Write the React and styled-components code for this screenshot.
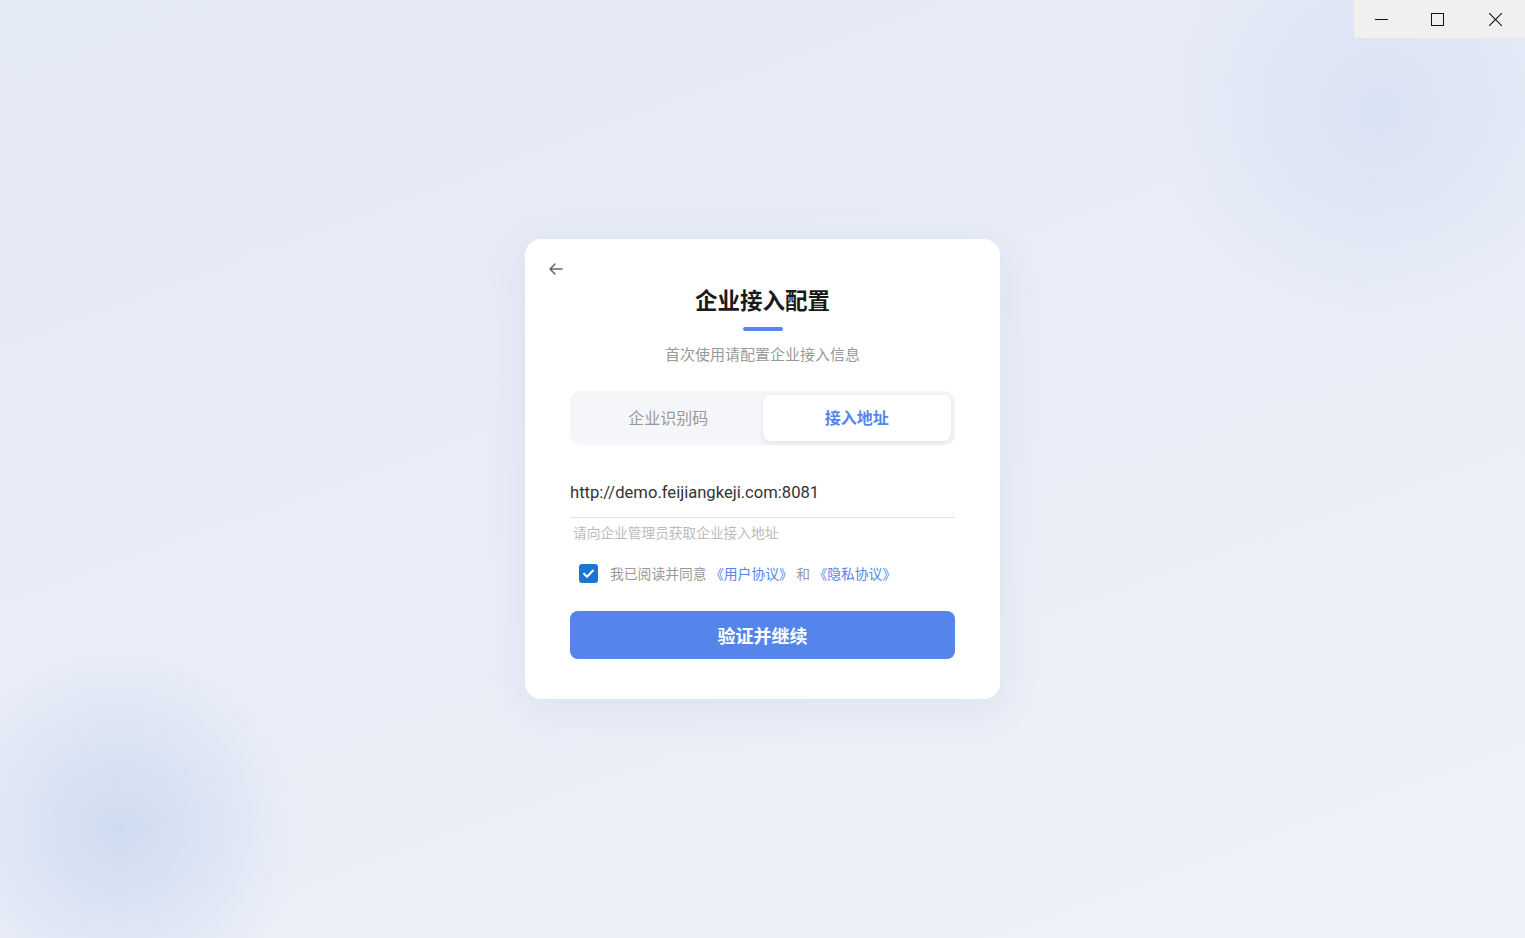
import React, { useState } from "react";
import styled, { createGlobalStyle } from "styled-components";

const GlobalStyle = createGlobalStyle`
  html, body { margin: 0; padding: 0; }
  body {
    font-family: Roboto, "Noto Sans CJK SC", sans-serif;
  }
`;

const Page = styled.div`
  position: relative;
  width: 100vw;
  height: 100vh;
  overflow: hidden;
  display: flex;
  align-items: center;
  justify-content: center;
  background:
    radial-gradient(circle at 120px 830px, rgba(200, 214, 238, 0.8) 0, rgba(200, 214, 238, 0) 180px),
    radial-gradient(circle at 1380px 110px, rgba(214, 224, 242, 0.8) 0, rgba(214, 224, 242, 0) 220px),
    linear-gradient(160deg, #e3e9f5 0%, #e8edf7 50%, #eef2fa 100%);
`;

const WindowBar = styled.div`
  position: absolute;
  top: 0;
  right: 0;
  display: flex;
  background: #f0f0f0;
`;

const WinButton = styled.button`
  width: ${p => p.$w}px;
  height: 38px;
  border: 0;
  background: transparent;
  display: flex;
  align-items: center;
  justify-content: center;
  padding: 0;
  color: #111;
`;

const Card = styled.div`
  width: 475px;
  box-sizing: border-box;
  background: #fff;
  border-radius: 16px;
  padding: 20px 45px 40px;
  box-shadow: 0 10px 40px rgba(120, 140, 180, 0.12);
  display: flex;
  flex-direction: column;
`;

const BackButton = styled.button`
  align-self: flex-start;
  margin-left: -24px;
  border: 0;
  background: transparent;
  padding: 0;
  width: 20px;
  height: 20px;
  color: #666;
  display: flex;
  align-items: center;
  justify-content: center;
`;

const Title = styled.h1`
  margin: 7px 0 0;
  text-align: center;
  font-size: 22.5px;
  font-weight: 700;
  color: #1a1a1a;
  line-height: 30px;
`;

const TitleBar = styled.div`
  width: 40px;
  height: 4px;
  border-radius: 2px;
  background: #5585ea;
  margin: 11px auto 0;
`;

const Subtitle = styled.p`
  margin: 14px 0 0;
  text-align: center;
  font-size: 15px;
  color: #999;
  line-height: 20px;
`;

const Tabs = styled.div`
  margin-top: 26px;
  display: grid;
  grid-template-columns: 1fr 1fr;
  background: #f5f6fa;
  border-radius: 10px;
  padding: 4px;
  height: 54px;
  box-sizing: border-box;
`;

const Tab = styled.button`
  border: 0;
  border-radius: 8px;
  font-family: inherit;
  font-size: 16px;
  font-weight: ${p => (p.$active ? 600 : 400)};
  color: ${p => (p.$active ? "#5585ea" : "#999")};
  background: ${p => (p.$active ? "#fff" : "transparent")};
  box-shadow: ${p => (p.$active ? "0 2px 6px rgba(0,0,0,0.08)" : "none")};
  padding: 0 0 2px;
  cursor: pointer;
`;

const Field = styled.div`
  margin-top: 37px;
  border-bottom: 1px solid #e0e0e0;
  padding-bottom: 13px;
`;

const Input = styled.input`
  width: 100%;
  border: 0;
  outline: none;
  padding: 0;
  font-family: Roboto, sans-serif;
  font-size: 16.6px;
  color: #333;
  line-height: 22px;
  background: transparent;
`;

const Hint = styled.div`
  margin-top: 5px;
  padding-left: 3px;
  font-size: 13.7px;
  color: #bbb;
  line-height: 20px;
`;

const Agree = styled.label`
  margin-top: 20px;
  display: flex;
  align-items: center;
  gap: 12px;
  padding-left: 9px;
  font-size: 13.8px;
  color: #999;
`;

const Check = styled.span`
  width: 19px;
  height: 19px;
  border-radius: 3px;
  background: #1976d2;
  display: flex;
  align-items: center;
  justify-content: center;
`;

const AgreeLink = styled.a`
  color: #5585ea;
  text-decoration: none;
`;

const Submit = styled.button`
  margin-top: 28px;
  height: 48px;
  border: 0;
  border-radius: 8px;
  background: #5585ea;
  color: #fff;
  font-family: inherit;
  font-size: 18px;
  font-weight: 700;
  cursor: pointer;
`;

export default function App() {
  const [tab, setTab] = useState(1);
  return (
    <Page>
      <GlobalStyle />
      <WindowBar>
        <WinButton $w={55}>
          <svg width="13" height="13" viewBox="0 0 13 13"><path d="M0 6.5h13" stroke="#111" strokeWidth="1" /></svg>
        </WinButton>
        <WinButton $w={57}>
          <svg width="13" height="13" viewBox="0 0 13 13"><rect x="0.5" y="0.5" width="12" height="12" fill="none" stroke="#111" strokeWidth="1" /></svg>
        </WinButton>
        <WinButton $w={59}>
          <svg width="13" height="13" viewBox="0 0 13 13"><path d="M0 0L13 13M13 0L0 13" stroke="#111" strokeWidth="1.1" /></svg>
        </WinButton>
      </WindowBar>
      <Card>
        <BackButton>
          <svg width="16" height="16" viewBox="0 0 16 16" fill="none">
            <path d="M14 8H2M7 3L2 8l5 5" stroke="#666" strokeWidth="1.5" strokeLinecap="round" strokeLinejoin="round" />
          </svg>
        </BackButton>
        <Title>企业接入配置</Title>
        <TitleBar />
        <Subtitle>首次使用请配置企业接入信息</Subtitle>
        <Tabs>
          <Tab $active={tab === 0} onClick={() => setTab(0)}>企业识别码</Tab>
          <Tab $active={tab === 1} onClick={() => setTab(1)}>接入地址</Tab>
        </Tabs>
        <Field>
          <Input defaultValue="http://demo.feijiangkeji.com:8081" />
        </Field>
        <Hint>请向企业管理员获取企业接入地址</Hint>
        <Agree>
          <Check>
            <svg width="13" height="13" viewBox="0 0 13 13" fill="none">
              <path d="M2 6.8l3 3L11 3.5" stroke="#fff" strokeWidth="2" strokeLinecap="round" strokeLinejoin="round" />
            </svg>
          </Check>
          <span>
            我已阅读并同意 <AgreeLink>《用户协议》</AgreeLink> 和 <AgreeLink>《隐私协议》</AgreeLink>
          </span>
        </Agree>
        <Submit>验证并继续</Submit>
      </Card>
    </Page>
  );
}
